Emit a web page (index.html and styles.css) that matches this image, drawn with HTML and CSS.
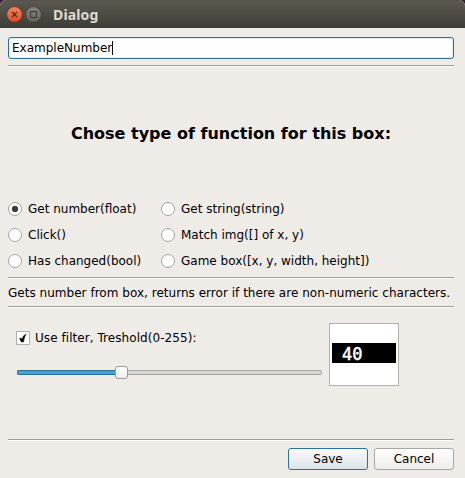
FILE: index.html
```html
<!DOCTYPE html>
<html lang="en">
<head>
<meta charset="utf-8">
<title>Dialog</title>
<link rel="stylesheet" href="styles.css">
</head>
<body>
<div class="window">
  <header class="titlebar">
    <svg class="controls" width="36" height="18" viewBox="0 0 36 18">
      <defs>
        <linearGradient id="close" x1="0" y1="0" x2="0" y2="1"><stop offset="0" stop-color="#f58560"/><stop offset="1" stop-color="#e2491c"/></linearGradient>
        <linearGradient id="max" x1="0" y1="0" x2="0" y2="1"><stop offset="0" stop-color="#85837a"/><stop offset="1" stop-color="#65635c"/></linearGradient>
      </defs>
      <circle cx="8.500" cy="8.500" r="7.900" fill="url(#close)" stroke="#3a3732" stroke-width=".8"/>
      <path d="M6 6l5 5M11 6l-5 5" stroke="#542617" stroke-width="1.200"/>
      <circle cx="27.500" cy="8.500" r="7.900" fill="url(#max)" stroke="#3a3832" stroke-width=".8"/>
      <rect x="24.500" y="5.500" width="6" height="6" fill="none" stroke="#3b3933"/>
    </svg>
    <span class="title">Dialog</span>
  </header>
  <main class="content">
    <div class="name-field"><span class="name-text">ExampleNumber</span></div>
    <div class="rule rule-top"></div>
    <h1 class="heading">Chose type of function for this box:</h1>
    <div class="options">
      <div class="option"><i class="radio checked"></i>Get number(float)</div>
      <div class="option"><i class="radio"></i>Get string(string)</div>
      <div class="option"><i class="radio"></i>Click()</div>
      <div class="option"><i class="radio"></i>Match img([] of x, y)</div>
      <div class="option"><i class="radio"></i>Has changed(bool)</div>
      <div class="option"><i class="radio"></i>Game box([x, y, width, height])</div>
    </div>
    <div class="rule rule-options"></div>
    <p class="description">Gets number from box, returns error if there are non-numeric characters.</p>
    <div class="rule"></div>
    <section class="filter">
      <div class="filter-controls">
        <div class="check-row">
          <svg class="checkbox" width="14" height="14" viewBox="0 0 14 14"><rect x=".5" y=".5" width="13" height="13" fill="#fff" stroke="#b4b1ad"/><path d="M3.500 7.500l1.700-.5.9 1.500c.5-2.500 1.600-4.300 3.900-5.500C8.900 5.300 8.100 7.900 7.500 11H5.300z" fill="#000" stroke="#000" stroke-width=".4"/></svg>
          <span class="check-label">Use filter, Treshold(0-255):</span>
        </div>
        <div class="slider"><div class="slider-fill"></div><div class="slider-thumb"></div><div class="slider-rest"></div></div>
      </div>
      <div class="preview"><div class="preview-strip">40</div></div>
    </section>
    <div class="rule"></div>
    <footer class="actions">
      <button class="button primary">Save</button>
      <button class="button">Cancel</button>
    </footer>
  </main>
</div>
</body>
</html>
```
FILE: styles.css
```css
* { box-sizing: border-box; }
body {
  margin: 0;
  background: #3a1c30;
  font: 12px/14px "DejaVu Sans", sans-serif;
  color: #000;
}
.window {
  height: 478px;
  display: flex;
  flex-direction: column;
  background: #efebe7;
  border-radius: 6px 6px 0 0;
  overflow: hidden;
}
.titlebar {
  height: 28px;
  display: flex;
  align-items: center;
  padding: 1px 0 0 6px;
  background: linear-gradient(#5c5950, #3d3c37);
  border-top: 1px solid #55534b;
}
.title {
  margin-left: 11px;
  font: bold 14px/20px "Noto Sans", sans-serif;
  letter-spacing: .15px;
  color: #dfdbd2;
}
.content {
  flex: 1;
  padding: 9px 11px 8px 8px;
  display: flex;
  flex-direction: column;
}
.name-field {
  height: 22px;
  display: flex;
  align-items: center;
  padding-left: 3px;
  background: #fff;
  border: 1px solid #2b7199;
  border-radius: 3px;
  box-shadow: inset 0 0 0 1px #e2eef4;
}
.name-text {
  border-right: 1px solid #000;
}
.rule {
  height: 2px;
  flex: none;
  background: #fff;
  border-top: 1px solid #9f9c98;
}
.rule-top { margin-top: 6px; }
.heading {
  height: 133px;
  margin: 0;
  display: flex;
  align-items: center;
  justify-content: center;
  font-size: 16px;
  line-height: 20px;
}
.options {
  display: grid;
  grid-template-columns: 153px 1fr;
  grid-auto-rows: 14px;
  row-gap: 12px;
  margin-top: 2px;
}
.option, .check-row {
  display: flex;
  align-items: center;
  white-space: nowrap;
}
.radio {
  width: 14px;
  height: 14px;
  margin-right: 6px;
  background: #fff;
  border: 1px solid #a7a4a0;
  border-radius: 50%;
}
.radio.checked { background: radial-gradient(circle, #3b3b3b 2.8px, #fff 3.6px); }
.rule-options { margin-top: 9px; }
.description {
  height: 27px;
  margin: 0;
  line-height: 28px;
  letter-spacing: .025px;
  white-space: nowrap;
}
.filter {
  height: 131px;
  display: flex;
  padding: 15px 0 0 8px;
}
.filter-controls {
  width: 306px;
  margin-right: 7px;
  padding-top: 8px;
}
.checkbox { margin-right: 5px; }
.check-label { letter-spacing: .06px; }
.slider {
  display: flex;
  align-items: center;
  margin: 21px 0 0 1px;
}
.slider-fill {
  width: 98px;
  height: 5px;
  background: #42a1df;
  border: 1px solid #286f98;
  border-right: 0;
  border-radius: 2px 0 0 2px;
}
.slider-thumb {
  width: 13px;
  height: 13px;
  background: linear-gradient(#fff, #f0eeec);
  border: 1px solid #9b9895;
  border-radius: 3px;
}
.slider-rest {
  flex: 1;
  height: 5px;
  background: #d9d6d2;
  border: 1px solid #aaa7a3;
  border-left: 0;
  border-radius: 0 2px 2px 0;
}
.preview {
  width: 70px;
  height: 63px;
  padding: 19px 2px;
  background: #fff;
  border: 1px solid #b4b1ad;
}
.preview-strip {
  width: 64px;
  height: 20px;
  padding-left: 10px;
  background: #000;
  color: #fff;
  font: 17px/22px "DejaVu Sans Mono", monospace;
  -webkit-text-stroke: .5px #fff;
}
.actions {
  display: flex;
  justify-content: flex-end;
  gap: 6px;
  margin-top: 7px;
}
.button {
  width: 80px;
  height: 22px;
  padding: 0;
  font: inherit;
  color: #000;
  background: linear-gradient(#fff, #efedea);
  border: 1px solid #aaa7a3;
  border-radius: 3px;
}
.button.primary {
  background: linear-gradient(#fafbfc, #dce3e7);
  border-color: #2b7199;
}
```
